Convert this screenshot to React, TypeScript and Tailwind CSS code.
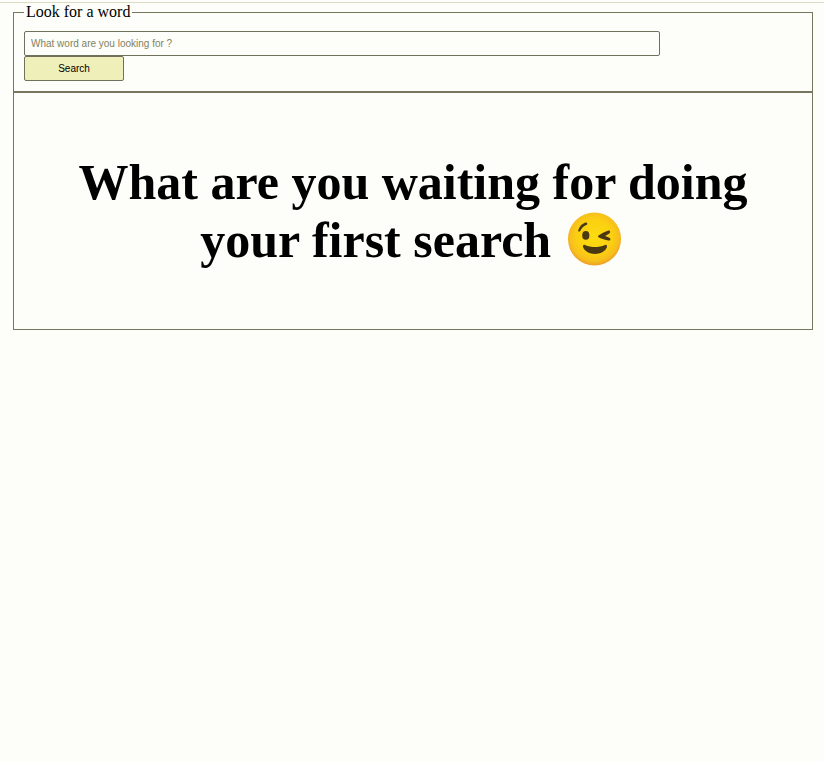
import React from "react";

function WinkingFace() {
  return (
    <svg
      role="img"
      aria-label="Winking face"
      viewBox="0 0 54 54"
      className="mx-1 inline-block size-[54px] align-[-9px]"
    >
      <defs>
        <radialGradient id="face" cx="50%" cy="46%" r="54%">
          <stop offset="0" stopColor="#fddc10" />
          <stop offset="0.6" stopColor="#fbd010" />
          <stop offset="0.85" stopColor="#f8bf1c" />
          <stop offset="1" stopColor="#eb9f28" />
        </radialGradient>
      </defs>
      <circle cx="26.5" cy="27" r="26.5" fill="url(#face)" />
      <g fill="#4a3812">
        <path d="M10.2 18.6C11.4 14 14.6 11 18 10.4C19.6 10.3 19.8 12.4 18.4 13C15.4 14.2 13.8 16 12.2 19C11.4 20.2 10 19.8 10.2 18.6Z" />
        <ellipse cx="17.8" cy="23.4" rx="3.6" ry="4.4" />
        <path d="M40.4 18.6C42 18.2 42.8 20.2 41.6 21.2L37.2 24L41.4 25.8C43.2 26.8 42.4 29 40.6 28.6C37.2 27.8 33.8 27 30.8 25.6C29.8 25 29.8 23.8 30.8 23.2C34 21.4 37 19.8 40.4 18.6Z" />
        <path d="M17 33C23.5 35.8 30.5 35.8 37 33C38.8 32.4 39.4 34 38.8 35.6C37 39.6 32.4 42 27 42C21.6 42 17 39.6 15.2 35.6C14.6 34 15.2 32.4 17 33Z" />
      </g>
    </svg>
  );
}

export default function App() {
  return (
    <div className="min-h-screen bg-[#fdfdf9] pt-[2px] font-['Liberation_Serif',serif] text-black">
      <hr className="border-t border-[#dcdcc4]" />
      <main className="ml-[13px] mr-[11px]">
        <form onSubmit={(event) => event.preventDefault()}>
          <fieldset className="border border-[#77775e] px-[10px] pb-[10px]">
            <legend className="mb-[10px] px-[2px] text-[16px] leading-[18px]">
              Look for a word
            </legend>
            <input
              type="text"
              aria-label="Word"
              placeholder="What word are you looking for ?"
              className="block h-[25px] w-[calc(80%+14px)] rounded-[2px] border border-[#70705c] bg-[#fdfdf9] px-[6px] font-['Liberation_Sans',sans-serif] text-[10px] placeholder:text-[#828260]"
            />
            <button
              type="submit"
              className="block h-[25px] w-[100px] rounded-[2px] border border-[#70705c] bg-[#efefba] font-['Liberation_Sans',sans-serif] text-[10px]"
            >
              Search
            </button>
          </fieldset>
        </form>
        <section className="border border-[#77775e] px-[50px] py-[60px]">
          <h1 className="text-center text-[50px] font-bold leading-[58px]">
            What are you waiting for doing your first search <WinkingFace />
          </h1>
        </section>
      </main>
    </div>
  );
}
